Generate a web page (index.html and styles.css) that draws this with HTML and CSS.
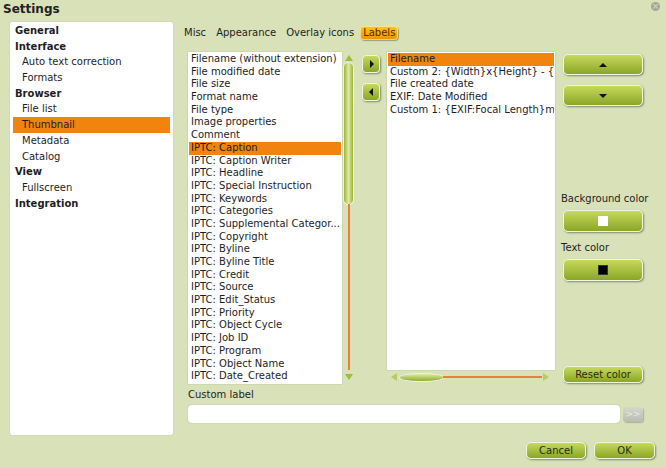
FILE: index.html
```html
<!DOCTYPE html>
<html lang="en">
<head>
  <meta charset="UTF-8">
  <title>Settings</title>
  <link rel="stylesheet" href="styles.css">
</head>
<body>

  <div class="titlebar">
    <span class="title">Settings</span>
    <span class="close">&#215;</span>
  </div>

  <div class="main">
    <div class="sidebar">
      <div class="item head">General</div>
      <div class="item head">Interface</div>
      <div class="item sub">Auto text correction</div>
      <div class="item sub">Formats</div>
      <div class="item head">Browser</div>
      <div class="item sub">File list</div>
      <div class="item sub selected">Thumbnail</div>
      <div class="item sub">Metadata</div>
      <div class="item sub">Catalog</div>
      <div class="item head">View</div>
      <div class="item sub">Fullscreen</div>
      <div class="item head">Integration</div>
    </div>

    <div class="content">
      <div class="tabs">
        <div class="tab">Misc</div>
        <div class="tab">Appearance</div>
        <div class="tab">Overlay icons</div>
        <div class="tab active">Labels</div>
      </div>

      <div class="lists">
        <div class="available">
          <div class="listbox">
            <div class="row">Filename (without extension)</div>
            <div class="row">File modified date</div>
            <div class="row">File size</div>
            <div class="row">Format name</div>
            <div class="row">File type</div>
            <div class="row">Image properties</div>
            <div class="row">Comment</div>
            <div class="row selected">IPTC: Caption</div>
            <div class="row">IPTC: Caption Writer</div>
            <div class="row">IPTC: Headline</div>
            <div class="row">IPTC: Special Instruction</div>
            <div class="row">IPTC: Keywords</div>
            <div class="row">IPTC: Categories</div>
            <div class="row">IPTC: Supplemental Categor...</div>
            <div class="row">IPTC: Copyright</div>
            <div class="row">IPTC: Byline</div>
            <div class="row">IPTC: Byline Title</div>
            <div class="row">IPTC: Credit</div>
            <div class="row">IPTC: Source</div>
            <div class="row">IPTC: Edit_Status</div>
            <div class="row">IPTC: Priority</div>
            <div class="row">IPTC: Object Cycle</div>
            <div class="row">IPTC: Job ID</div>
            <div class="row">IPTC: Program</div>
            <div class="row">IPTC: Object Name</div>
            <div class="row">IPTC: Date_Created</div>
          </div>
          <div class="vscroll">
            <span class="arrow up"></span>
            <div class="vtrack">
              <div class="vthumb"></div>
              <div class="vline"></div>
            </div>
            <span class="arrow down"></span>
          </div>
        </div>

        <div class="movers">
          <div class="btn small"><span class="tri right"></span></div>
          <div class="btn small"><span class="tri left"></span></div>
        </div>

        <div class="chosen">
          <div class="listbox right-list">
            <div class="row selected">Filename</div>
            <div class="row">Custom 2: {Width}x{Height} - {Size}</div>
            <div class="row">File created date</div>
            <div class="row">EXIF: Date Modified</div>
            <div class="row">Custom 1: {EXIF:Focal Length}mm</div>
          </div>
          <div class="hscroll">
            <span class="arrow hleft"></span>
            <div class="hthumb"></div>
            <div class="hline"></div>
            <span class="arrow hright"></span>
          </div>
        </div>

        <div class="side">
          <div class="btn big"><span class="tri upt"></span></div>
          <div class="btn big second"><span class="tri downt"></span></div>
          <div class="side-label bg-label">Background color</div>
          <div class="btn big color"><span class="swatch white"></span></div>
          <div class="side-label">Text color</div>
          <div class="btn big color"><span class="swatch black"></span></div>
          <div class="btn text reset">Reset color</div>
        </div>
      </div>

      <div class="custom-label">Custom label</div>
      <div class="input-row">
        <div class="input"></div>
        <div class="go">&gt;&gt;</div>
      </div>

      <div class="footer">
        <div class="btn text cancel">Cancel</div>
        <div class="btn text ok">OK</div>
      </div>
    </div>
  </div>

</body>
</html>
```

FILE: styles.css
```css
body {
  font-family: "DejaVu Sans", sans-serif;
  font-size: 10px;
  color: #1e1e1e;
  margin: 0;
  background-color: #d9e1b9;
  width: 666px;
  height: 468px;
  overflow: hidden;
}

.titlebar {
  height: 20px;
  display: flex;
  justify-content: space-between;
  align-items: flex-start;
}

.title {
  font-weight: bold;
  font-size: 12px;
  margin: 2px 0 0 3px;
  color: #222;
}

.close {
  width: 9px;
  height: 9px;
  margin: 2px 6px 0 0;
  border-radius: 50%;
  background: #a4a898;
  color: #d9e1b9;
  font-size: 9px;
  line-height: 9px;
  text-align: center;
}

.main {
  display: flex;
  margin-top: 2px;
}

.sidebar {
  width: 163px;
  height: 413px;
  margin-left: 10px;
  background: #fff;
  border-radius: 2px;
  box-shadow: 0 0 1px rgba(0,0,0,0.25);
  padding-top: 1px;
  box-sizing: border-box;
}

.item {
  height: 15.7px;
  line-height: 15.7px;
  margin: 0 3px;
}

.item.head {
  font-weight: bold;
  padding-left: 2px;
}

.item.sub {
  padding-left: 9px;
}

.selected {
  background-color: #f0840f;
}

.content {
  margin-left: 11px;
  width: 471px;
}

.tabs {
  display: flex;
  height: 15px;
  margin-top: 3px;
  align-items: center;
}

.tab {
  margin-right: 10px;
  line-height: 14px;
}

.tab.active {
  margin-left: -4px;
  padding: 0 3px;
  border-radius: 4px;
  background: linear-gradient(#f9cc10, #ec8f04);
  color: #5a2a00;
  box-shadow: 1px 1px 1px rgba(0,0,0,0.3), inset 0 0 0 1px rgba(255,255,255,0.5);
}

.lists {
  display: flex;
  margin-top: 12px;
  margin-left: 4px;
  height: 332px;
}

.available {
  display: flex;
}

.listbox {
  background: #fff;
  width: 154px;
  height: 332px;
  overflow: hidden;
  padding-top: 1px;
  box-sizing: border-box;
  box-shadow: 0 0 1px rgba(0,0,0,0.25);
}

.row {
  height: 12.7px;
  line-height: 12.7px;
  padding-left: 2px;
  margin: 0 1px;
  white-space: nowrap;
  overflow: hidden;
}

.vscroll {
  width: 13px;
  display: flex;
  flex-direction: column;
  align-items: center;
}

.arrow {
  width: 0;
  height: 0;
}

.arrow.up {
  margin-top: 3px;
  border-left: 4px solid transparent;
  border-right: 4px solid transparent;
  border-bottom: 6px solid #9fbd3a;
}

.arrow.down {
  margin-bottom: 4px;
  border-left: 4px solid transparent;
  border-right: 4px solid transparent;
  border-top: 6px solid #9fbd3a;
}

.vtrack {
  flex: 1;
  display: flex;
  flex-direction: column;
  align-items: center;
  margin: 2px 0 4px;
}

.vthumb {
  width: 9px;
  height: 141px;
  border-radius: 5px;
  background: linear-gradient(90deg, #9cb634, #dfeaa6 50%, #9cb634);
  box-shadow: 0 0 0 1px rgba(255,255,255,0.6);
}

.vline {
  width: 2px;
  flex: 1;
  background: #e8803a;
}

.movers {
  width: 32px;
  display: flex;
  flex-direction: column;
  align-items: center;
  padding-top: 3px;
  gap: 10px;
}

.btn {
  background: linear-gradient(#c6d95c, #8ba627);
  border: 1px solid #f3f6de;
  border-radius: 5px;
  box-shadow: 1px 1px 2px rgba(0,0,0,0.4);
  display: flex;
  align-items: center;
  justify-content: center;
  box-sizing: border-box;
}

.btn.small {
  width: 18px;
  height: 18px;
  border-radius: 4px;
}

.tri {
  width: 0;
  height: 0;
}

.tri.right {
  border-top: 4px solid transparent;
  border-bottom: 4px solid transparent;
  border-left: 4px solid #111;
  margin-left: 1px;
}

.tri.left {
  border-top: 4px solid transparent;
  border-bottom: 4px solid transparent;
  border-right: 4px solid #111;
}

.tri.upt {
  border-left: 4px solid transparent;
  border-right: 4px solid transparent;
  border-bottom: 4px solid #111;
}

.tri.downt {
  border-left: 4px solid transparent;
  border-right: 4px solid transparent;
  border-top: 4px solid #111;
}

.chosen {
  display: flex;
  flex-direction: column;
}

.right-list {
  width: 168px;
  height: 318px;
}

.hscroll {
  display: flex;
  align-items: center;
  height: 14px;
  padding: 0 6px 0 4px;
}

.arrow.hleft {
  border-top: 4px solid transparent;
  border-bottom: 4px solid transparent;
  border-right: 6px solid #b7cc62;
}

.hthumb {
  width: 43px;
  height: 7px;
  margin-left: 3px;
  border-radius: 50%;
  background: linear-gradient(#dfeaa6, #8fab2c);
  box-shadow: 0 0 0 1px rgba(255,255,255,0.6);
}

.hline {
  flex: 1;
  height: 2px;
  background: #e8803a;
}

.arrow.hright {
  border-top: 4px solid transparent;
  border-bottom: 4px solid transparent;
  border-left: 6px solid #b7cc62;
  margin-left: 1px;
}

.side {
  display: flex;
  flex-direction: column;
  margin-left: 8px;
  padding-top: 2px;
}

.btn.big {
  width: 80px;
  height: 21px;
}

.btn.second {
  margin-top: 10px;
}

.btn.color {
  height: 22px;
}

.side-label {
  margin-top: 10px;
  height: 12px;
  line-height: 12px;
  margin-bottom: 5px;
  margin-left: -2px;
}

.side-label.bg-label {
  margin-top: 87px;
}

.swatch {
  width: 10px;
  height: 10px;
}

.swatch.white {
  background: #fff;
}

.swatch.black {
  background: #000;
  border: 1px solid #333;
  box-sizing: border-box;
}

.btn.text {
  height: 17px;
  color: #2a2e10;
}

.reset {
  width: 80px;
  margin-top: auto;
  margin-bottom: 1px;
}

.custom-label {
  margin: 5px 0 0 4px;
  line-height: 12px;
}

.input-row {
  display: flex;
  align-items: center;
  margin: 4px 0 0 4px;
}

.input {
  width: 432px;
  height: 18px;
  background: #fff;
  border-radius: 4px;
  box-shadow: 0 0 1px rgba(0,0,0,0.3);
}

.go {
  width: 20px;
  height: 15px;
  margin-left: 3px;
  border-radius: 3px;
  background: linear-gradient(#d4d8cc, #b9bdb0);
  color: #e6e8e0;
  font-size: 9px;
  line-height: 15px;
  text-align: center;
  box-shadow: 1px 1px 1px rgba(0,0,0,0.2);
}

.footer {
  display: flex;
  justify-content: flex-end;
  gap: 8px;
  margin-top: 19px;
}

.cancel {
  width: 60px;
}

.ok {
  width: 61px;
}
```
